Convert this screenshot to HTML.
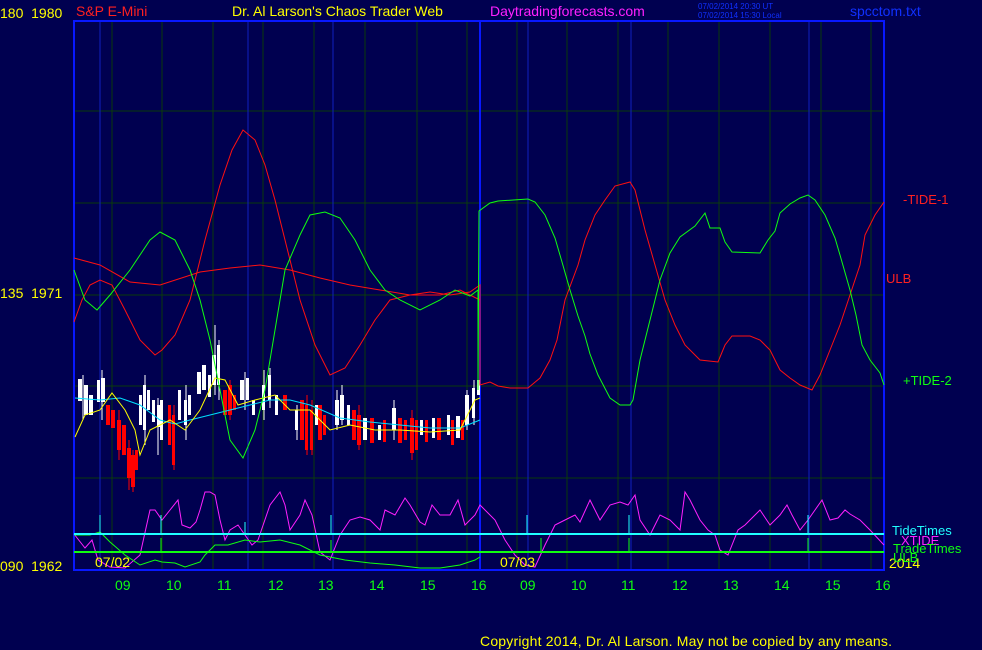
<!DOCTYPE html>
<html><head><meta charset="utf-8"><style>
html,body{margin:0;padding:0;background:#000050;width:982px;height:650px;overflow:hidden}
svg{display:block}
text{font-family:"Liberation Sans",sans-serif;font-size:14px;white-space:pre}
</style></head><body>
<svg width="982" height="650" viewBox="0 0 982 650" xmlns="http://www.w3.org/2000/svg">
<rect width="982" height="650" fill="#000050"/>
<g stroke="#0a3a0a" stroke-width="1">
<line x1="74" y1="111" x2="884" y2="111"/><line x1="74" y1="203" x2="884" y2="203"/>
<line x1="74" y1="295" x2="884" y2="295"/><line x1="74" y1="386" x2="884" y2="386"/>
<line x1="74" y1="478" x2="884" y2="478"/>
<line x1="112" y1="21" x2="112" y2="570"/><line x1="162" y1="21" x2="162" y2="570"/>
<line x1="213" y1="21" x2="213" y2="570"/><line x1="263" y1="21" x2="263" y2="570"/>
<line x1="314" y1="21" x2="314" y2="570"/><line x1="365" y1="21" x2="365" y2="570"/>
<line x1="417" y1="21" x2="417" y2="570"/><line x1="467" y1="21" x2="467" y2="570"/>
<line x1="517" y1="21" x2="517" y2="570"/><line x1="567" y1="21" x2="567" y2="570"/>
<line x1="618" y1="21" x2="618" y2="570"/><line x1="668" y1="21" x2="668" y2="570"/>
<line x1="719" y1="21" x2="719" y2="570"/><line x1="770" y1="21" x2="770" y2="570"/>
<line x1="821" y1="21" x2="821" y2="570"/><line x1="871" y1="21" x2="871" y2="570"/>
</g>
<g stroke="#1020c0" stroke-width="1">
<line x1="100" y1="21" x2="100" y2="570"/><line x1="248" y1="21" x2="248" y2="570"/>
<line x1="333" y1="21" x2="333" y2="570"/><line x1="528" y1="21" x2="528" y2="570"/>
<line x1="631" y1="21" x2="631" y2="570"/><line x1="809" y1="21" x2="809" y2="570"/>
</g>
<rect x="74" y="21" width="810" height="549" fill="none" stroke="#0818ff" stroke-width="2"/>
<line x1="480" y1="21" x2="480" y2="570" stroke="#0818ff" stroke-width="2"/>

<g stroke="#fff" stroke-width="1">
<line x1="83" y1="375" x2="83" y2="420"/><line x1="102" y1="370" x2="102" y2="420"/><line x1="145" y1="375" x2="145" y2="445"/>
<line x1="158" y1="398" x2="158" y2="455"/><line x1="186" y1="385" x2="186" y2="440"/><line x1="215" y1="325" x2="215" y2="395"/>
<line x1="219" y1="340" x2="219" y2="400"/><line x1="245" y1="372" x2="245" y2="410"/><line x1="264" y1="370" x2="264" y2="420"/>
<line x1="270" y1="368" x2="270" y2="408"/><line x1="297" y1="405" x2="297" y2="440"/><line x1="337" y1="390" x2="337" y2="430"/>
<line x1="342" y1="385" x2="342" y2="425"/><line x1="394" y1="400" x2="394" y2="440"/><line x1="467" y1="390" x2="467" y2="430"/><line x1="474" y1="380" x2="474" y2="425"/>
</g>
<g stroke="#ff0000" stroke-width="1">
<line x1="119" y1="410" x2="119" y2="460"/><line x1="129" y1="440" x2="129" y2="490"/><line x1="133" y1="450" x2="133" y2="492"/>
<line x1="174" y1="405" x2="174" y2="470"/><line x1="230" y1="380" x2="230" y2="420"/><line x1="307" y1="395" x2="307" y2="455"/>
<line x1="312" y1="400" x2="312" y2="455"/><line x1="359" y1="405" x2="359" y2="450"/><line x1="412" y1="410" x2="412" y2="460"/>
</g>
<g fill="#fff">
<rect x="78" y="379" width="4" height="22"/><rect x="84" y="385" width="4" height="30"/><rect x="89" y="395" width="4" height="20"/>
<rect x="97" y="380" width="3" height="22"/><rect x="101" y="378" width="4" height="24"/>
<rect x="139" y="395" width="3" height="30"/><rect x="143" y="385" width="3" height="45"/><rect x="147" y="390" width="3" height="20"/>
<rect x="152" y="400" width="3" height="22"/><rect x="157" y="405" width="3" height="22"/><rect x="160" y="400" width="3" height="40"/>
<rect x="178" y="390" width="3" height="30"/><rect x="184" y="400" width="3" height="25"/><rect x="188" y="395" width="3" height="20"/>
<rect x="197" y="372" width="4" height="22"/><rect x="202" y="365" width="4" height="25"/><rect x="208" y="375" width="3" height="22"/>
<rect x="212" y="355" width="4" height="30"/><rect x="217" y="345" width="3" height="40"/>
<rect x="240" y="380" width="4" height="20"/><rect x="246" y="378" width="3" height="22"/>
<rect x="252" y="400" width="3" height="15"/><rect x="262" y="385" width="3" height="25"/><rect x="268" y="375" width="3" height="25"/>
<rect x="275" y="395" width="3" height="20"/><rect x="295" y="410" width="3" height="20"/><rect x="315" y="405" width="3" height="20"/>
<rect x="335" y="400" width="4" height="25"/><rect x="340" y="395" width="4" height="25"/><rect x="347" y="405" width="3" height="20"/>
<rect x="363" y="418" width="4" height="22"/><rect x="378" y="425" width="3" height="15"/><rect x="392" y="408" width="4" height="22"/>
<rect x="420" y="420" width="3" height="15"/><rect x="432" y="418" width="3" height="20"/><rect x="447" y="415" width="3" height="20"/>
<rect x="456" y="416" width="4" height="22"/><rect x="465" y="395" width="4" height="30"/><rect x="472" y="388" width="3" height="30"/><rect x="477" y="380" width="3" height="15"/>
</g>
<g fill="#ff0000">
<rect x="106" y="405" width="4" height="20"/><rect x="111" y="410" width="4" height="18"/><rect x="117" y="420" width="4" height="30"/>
<rect x="122" y="425" width="4" height="30"/><rect x="127" y="448" width="4" height="30"/><rect x="131" y="455" width="4" height="32"/>
<rect x="135" y="450" width="3" height="20"/><rect x="168" y="405" width="3" height="40"/><rect x="172" y="415" width="3" height="50"/>
<rect x="223" y="390" width="4" height="25"/><rect x="228" y="385" width="4" height="30"/><rect x="233" y="395" width="3" height="15"/>
<rect x="283" y="395" width="4" height="15"/><rect x="300" y="400" width="4" height="40"/><rect x="305" y="405" width="3" height="45"/>
<rect x="310" y="410" width="3" height="40"/><rect x="318" y="405" width="4" height="35"/><rect x="323" y="415" width="3" height="20"/>
<rect x="352" y="410" width="4" height="30"/><rect x="357" y="415" width="4" height="30"/><rect x="370" y="418" width="4" height="25"/>
<rect x="383" y="420" width="3" height="22"/><rect x="398" y="418" width="4" height="25"/><rect x="404" y="420" width="3" height="20"/>
<rect x="410" y="418" width="4" height="35"/><rect x="415" y="420" width="3" height="30"/><rect x="425" y="420" width="3" height="22"/>
<rect x="437" y="418" width="4" height="22"/><rect x="451" y="420" width="3" height="25"/><rect x="461" y="420" width="3" height="20"/>
</g>
<polyline fill="none" stroke="#00e0ff" stroke-width="1" points="75,398 100,400 120,398 140,405 160,420 175,424 190,420 210,415 230,410 250,405 270,400 290,400 310,405 340,418 370,422 400,425 430,428 460,428 480,420"/>
<polyline fill="none" stroke="#ffff00" stroke-width="1" points="75,437 85,415 100,410 112,393 125,410 135,430 140,455 150,430 170,420 185,430 200,410 215,378 225,380 238,405 255,400 275,395 290,410 310,410 320,420 330,430 350,425 375,430 400,430 430,432 460,430 475,400 480,398"/>

<polyline fill="none" stroke="#ff1010" stroke-width="1" points="74,322 82,300 90,285 100,280 112,285 125,310 140,340 155,355 162,350 175,335 190,300 205,240 220,185 232,150 243,130 255,140 265,165 275,200 285,240 300,300 315,345 330,375 345,368 360,345 375,320 390,300 410,295 430,292 450,295 470,292 480,285 480,385 490,382 498,386 510,388 528,388 540,378 550,360 557,340 565,300 578,265 585,240 595,215 605,200 615,186 630,182 635,190 645,230 655,265 665,300 675,325 685,345 700,360 718,362 725,345 732,336 750,336 760,340 770,350 780,370 790,378 800,385 812,390 820,375 830,350 840,325 850,295 860,265 865,235 875,215 884,202"/>
<polyline fill="none" stroke="#ff1010" stroke-width="1" points="74,258 100,265 130,282 160,285 200,272 230,268 260,265 290,270 320,278 350,285 380,290 410,295 440,295 460,290 480,300"/>
<polyline fill="none" stroke="#10ff10" stroke-width="1" points="74,270 85,300 97,310 110,295 130,270 150,240 160,232 175,240 190,270 200,300 210,340 220,390 230,440 243,458 255,430 265,390 275,330 285,270 300,235 310,215 325,212 340,218 355,240 370,270 385,290 400,300 420,310 440,300 455,290 470,296 478,290 478,390 479,211 490,203 498,201 528,199 535,202 545,215 555,238 562,262 570,290 578,316 585,336 590,354 598,375 610,398 620,405 630,405 633,400 640,360 650,320 660,280 670,253 680,237 695,226 705,213 710,228 720,228 725,242 732,252 760,253 768,240 775,231 780,213 790,204 800,198 808,195 815,200 825,215 835,238 840,255 850,290 856,315 862,345 870,360 880,373 884,385"/>

<polyline fill="none" stroke="#ff20ff" stroke-width="1" points="74,534 85,548 92,540 98,560 110,567 125,568 140,555 150,510 155,510 162,520 170,510 178,500 182,525 190,528 196,522 200,510 205,492 210,492 215,495 220,520 225,540 230,530 238,525 245,535 252,545 258,540 270,505 280,492 285,505 290,530 300,515 305,500 312,515 320,552 330,560 340,535 350,520 360,517 370,520 380,530 385,510 395,515 405,498 410,505 420,522 425,525 432,505 440,515 450,515 458,500 465,525 475,515 480,505 495,520 505,540 515,555 525,565 535,567 545,545 555,525 565,520 575,515 580,522 590,500 600,520 610,505 620,502 628,505 635,495 640,520 650,535 660,515 670,520 680,530 685,492 690,500 700,520 708,530 715,535 720,550 728,555 738,530 745,525 755,515 760,510 770,525 780,515 787,505 792,515 800,530 808,520 815,510 822,500 830,520 838,518 845,510 850,514 860,520 870,530 884,545"/>
<polyline fill="none" stroke="#10ff10" stroke-width="1" points="74,535 90,535 100,532 110,542 125,555 140,565 155,560 162,562 175,563 185,567 200,562 205,555 215,545 228,545 245,540 260,542 280,540 300,545 320,555 335,558 345,560 370,563 395,565 420,568 440,568 460,565 475,560 480,557"/>
<line x1="74" y1="534" x2="884" y2="534" stroke="#20ffff" stroke-width="2"/>
<line x1="74" y1="552" x2="884" y2="552" stroke="#10ff10" stroke-width="2"/>
<g stroke="#20ffff" stroke-width="1">
<line x1="100" y1="515" x2="100" y2="534"/><line x1="161" y1="515" x2="161" y2="534"/><line x1="245" y1="522" x2="245" y2="534"/>
<line x1="331" y1="515" x2="331" y2="534"/><line x1="527" y1="515" x2="527" y2="534"/><line x1="629" y1="515" x2="629" y2="534"/><line x1="808" y1="515" x2="808" y2="534"/>
</g>
<g stroke="#10ff10" stroke-width="1">
<line x1="161" y1="538" x2="161" y2="552"/><line x1="331" y1="540" x2="331" y2="552"/><line x1="541" y1="538" x2="541" y2="552"/><line x1="629" y1="538" x2="629" y2="552"/><line x1="808" y1="538" x2="808" y2="552"/>
</g>

<g fill="#ffff00">
<text x="0" y="18">180  1980</text>
<text x="0" y="298">135  1971</text>
<text x="0" y="571">090  1962</text>
</g>
<text x="76" y="16" fill="#ff2020">S&amp;P E-Mini</text>
<text x="232" y="16" fill="#ffff00">Dr. Al Larson's Chaos Trader Web</text>
<text x="490" y="16" fill="#ff20ff">Daytradingforecasts.com</text>
<text x="698" y="9" fill="#1030ff" style="font-size:8px">07/02/2014 20:30 UT</text>
<text x="698" y="18" fill="#1030ff" style="font-size:8px">07/02/2014 15:30 Local</text>
<text x="850" y="16" fill="#1030ff">spcctom.txt</text>
<text x="95" y="567" fill="#ffff00">07/02</text>
<text x="500" y="567" fill="#ffff00">07/03</text>
<text x="889" y="568" fill="#ffff00">2014</text>
<text x="903" y="204" fill="#ff2020" style="font-size:13px">-TIDE-1</text>
<text x="886" y="283" fill="#ff2020" style="font-size:13px">ULB</text>
<text x="903" y="385" fill="#10ff10" style="font-size:13px">+TIDE-2</text>
<text x="892" y="535" fill="#20ffff" style="font-size:13px">TideTimes</text>
<text x="901" y="545" fill="#ff20ff" style="font-size:13px">XTIDE</text>
<text x="893" y="553" fill="#10ff10" style="font-size:13px">TradeTimes</text>
<text x="893" y="562" fill="#10ff10" style="font-size:13px">ULB</text>
<g fill="#10ff10">
<text x="115" y="590">09</text><text x="166" y="590">10</text><text x="217" y="590">11</text><text x="268" y="590">12</text>
<text x="318" y="590">13</text><text x="369" y="590">14</text><text x="420" y="590">15</text><text x="471" y="590">16</text>
<text x="520" y="590">09</text><text x="571" y="590">10</text><text x="621" y="590">11</text><text x="672" y="590">12</text>
<text x="723" y="590">13</text><text x="774" y="590">14</text><text x="825" y="590">15</text><text x="875" y="590">16</text>
</g>
<text x="480" y="646" fill="#ffff00" textLength="412">Copyright 2014, Dr. Al Larson. May not be copied by any means.</text>
</svg>
</body></html>
